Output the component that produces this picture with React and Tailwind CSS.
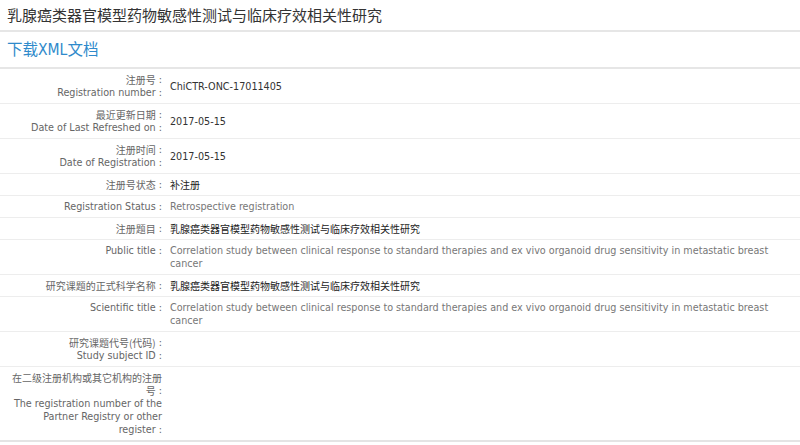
const ZH = ({ children }) => (
  <span className="text-[10px] align-top [font-family:'Noto_Sans_CJK_SC',sans-serif]">{children}</span>
);

const rows = [
  {
    label: (
      <>
        <ZH>注册号</ZH> :<br />Registration number :
      </>
    ),
    value: <span className="text-[#333]">ChiCTR-ONC-17011405</span>,
  },
  {
    label: (
      <>
        <ZH>最近更新日期</ZH> :<br />Date of Last Refreshed on :
      </>
    ),
    value: <span className="text-[#333]">2017-05-15</span>,
  },
  {
    label: (
      <>
        <ZH>注册时间</ZH> :<br />Date of Registration :
      </>
    ),
    value: <span className="text-[#333]">2017-05-15</span>,
  },
  {
    label: (
      <>
        <ZH>注册号状态</ZH> :
      </>
    ),
    value: <span className="text-[#222]"><ZH>补注册</ZH></span>,
  },
  {
    label: <>Registration Status :</>,
    value: <span className="text-[#777]">Retrospective registration</span>,
  },
  {
    label: (
      <>
        <ZH>注册题目</ZH> :
      </>
    ),
    value: <span className="text-[#222]"><ZH>乳腺癌类器官模型药物敏感性测试与临床疗效相关性研究</ZH></span>,
  },
  {
    label: <>Public title :</>,
    value: (
      <span className="text-[#777]">
        Correlation study between clinical response to standard therapies and ex vivo organoid drug sensitivity in metastatic breast cancer
      </span>
    ),
  },
  {
    label: (
      <>
        <ZH>研究课题的正式科学名称</ZH> :
      </>
    ),
    value: <span className="text-[#222]"><ZH>乳腺癌类器官模型药物敏感性测试与临床疗效相关性研究</ZH></span>,
  },
  {
    label: <>Scientific title :</>,
    value: (
      <span className="text-[#777]">
        Correlation study between clinical response to standard therapies and ex vivo organoid drug sensitivity in metastatic breast cancer
      </span>
    ),
  },
  {
    label: (
      <>
        <ZH>研究课题代号(代码)</ZH> :<br />Study subject ID :
      </>
    ),
    value: null,
  },
  {
    label: (
      <>
        <ZH>在二级注册机构或其它机构的注册号</ZH> :<br />The registration number of the Partner Registry or other register :
      </>
    ),
    value: null,
  },
];

export default function App() {
  return (
    <div className="w-[800px] h-[445px] overflow-hidden bg-white [font-family:'DejaVu_Sans_Condensed','DejaVu_Sans','Noto_Sans_CJK_SC',sans-serif]">
      <div className="h-[32px] flex items-center px-[7px] border-b-2 border-[#e6e6e6]">
        <h1 className="text-[15px] text-[#333] [font-family:'Noto_Sans_CJK_SC',sans-serif] leading-none -mt-[1px]">
          乳腺癌类器官模型药物敏感性测试与临床疗效相关性研究
        </h1>
      </div>
      <div className="h-[37px] flex items-center px-[7px] border-b-2 border-[#e6e6e6]">
        <a className="text-[15.5px] text-[#2f8acb] leading-none">
          <span className="[font-family:'Noto_Sans_CJK_SC',sans-serif]">下载</span>
          XML
          <span className="[font-family:'Noto_Sans_CJK_SC',sans-serif]">文档</span>
        </a>
      </div>
      <div className="text-[10.7px] leading-[13px] border-b-2 border-[#e4e4e4]">
        {rows.map((r, i) => (
          <div key={i} className="grid grid-cols-[166px_1fr] border-b border-[#ededed] last:border-b-0">
            <div className="py-[4px] pl-[10px] pr-[4px] text-right text-[#666]">{r.label}</div>
            <div className="py-[4px] pl-[4px] pr-[16px] flex items-center">
              <div>{r.value}</div>
            </div>
          </div>
        ))}
      </div>
    </div>
  );
}
